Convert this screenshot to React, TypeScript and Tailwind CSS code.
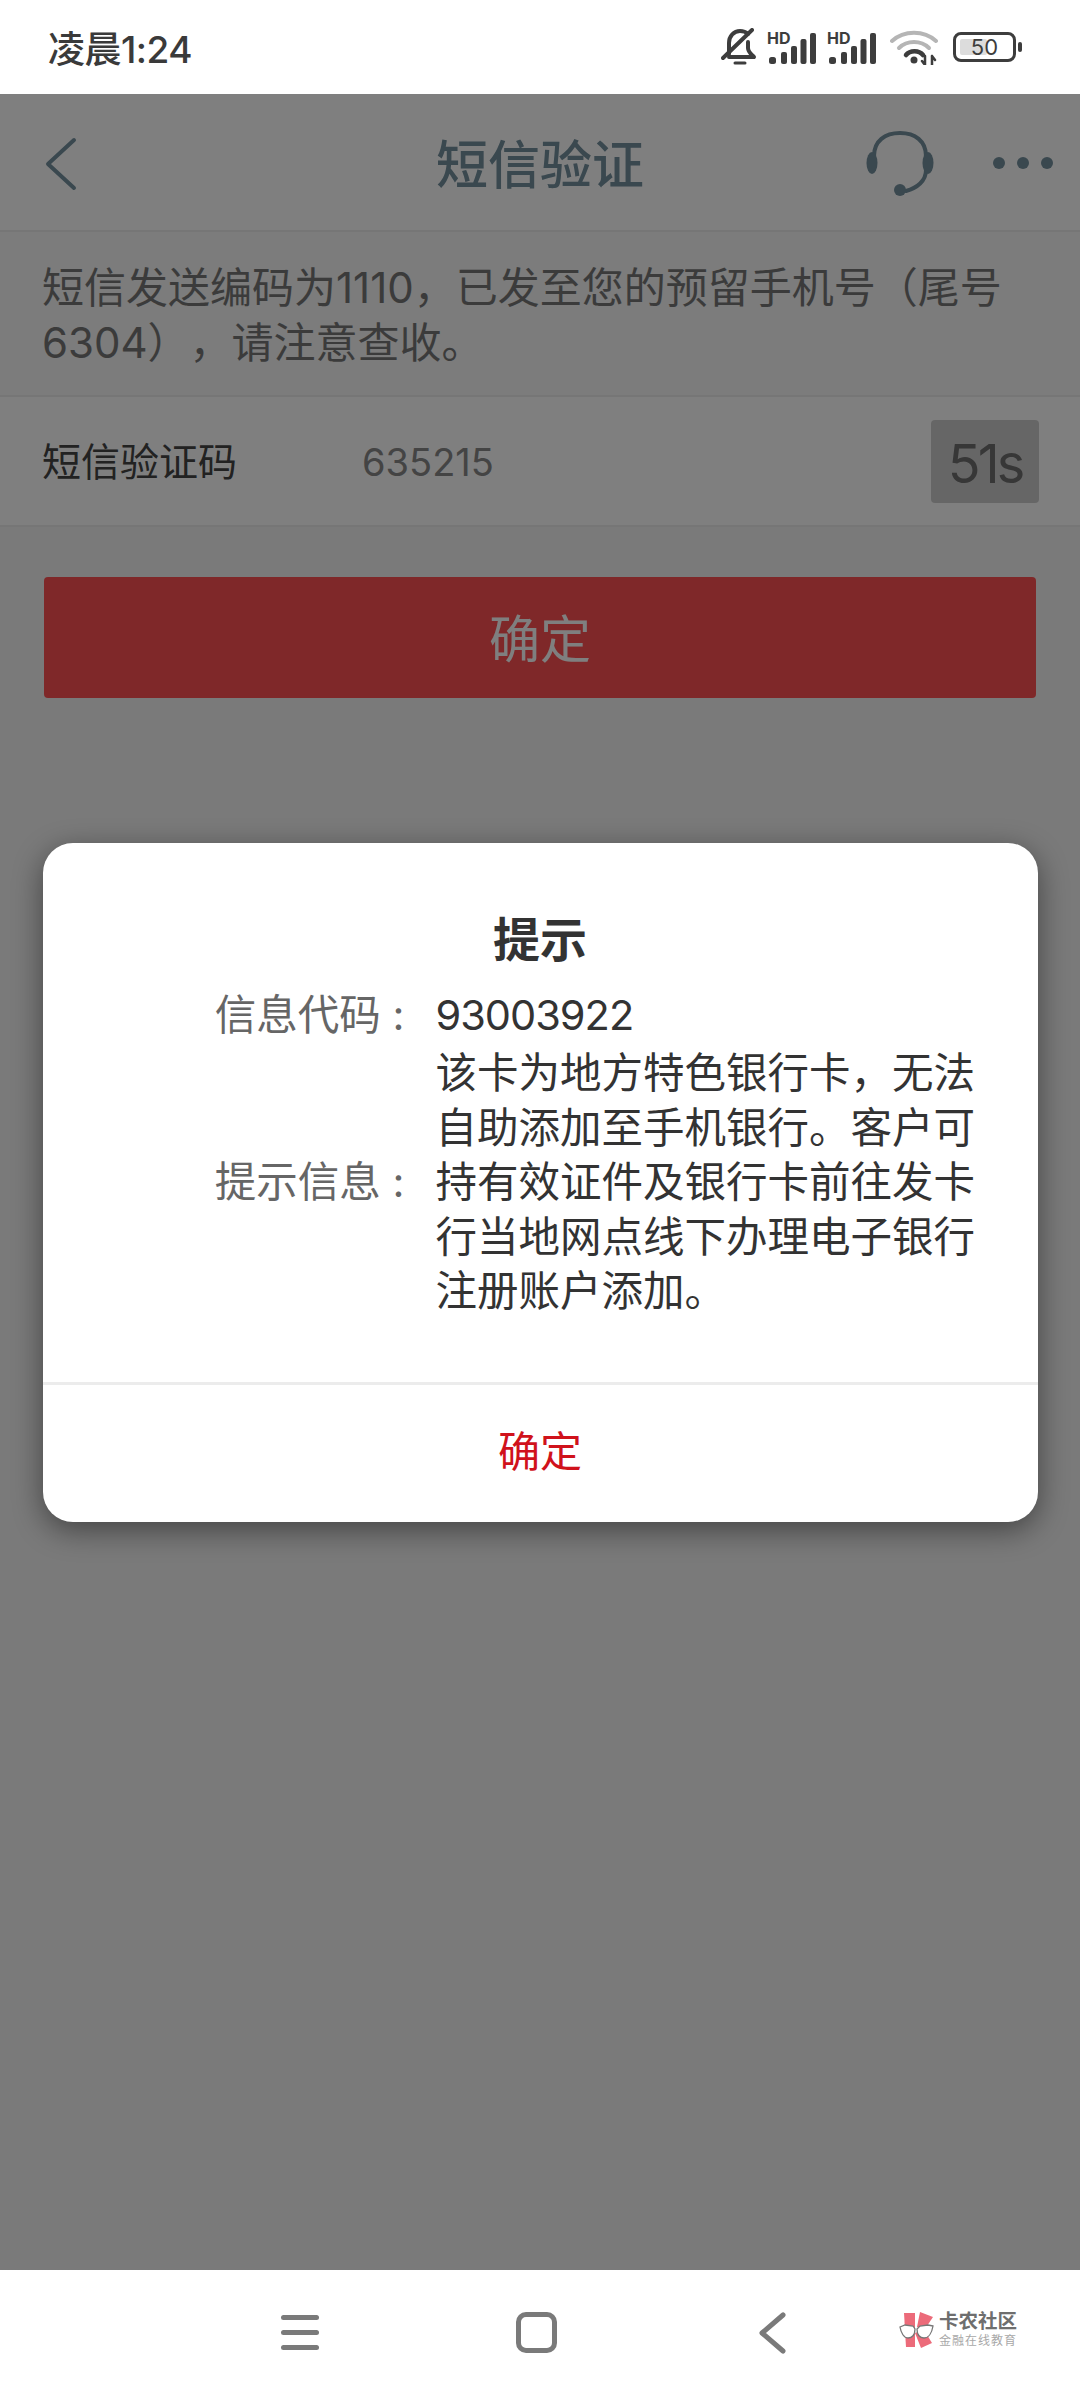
const cjk = { fontFamily: 'Inter, "Noto Sans CJK SC", "Noto Sans", sans-serif' };

function Signal() {
  return (
    <svg width="51" height="34" viewBox="0 0 51 34" fill="#3d3d3d">
      <text x="0" y="14" fontSize="16" fontWeight="700" fontFamily="Inter, sans-serif">HD</text>
      <rect x="2" y="27" width="7" height="7" rx="2.5" />
      <rect x="14" y="22" width="6" height="12" rx="2" />
      <rect x="24" y="16" width="6" height="18" rx="2" />
      <rect x="33.5" y="9" width="6" height="25" rx="2" />
      <rect x="43" y="3" width="6" height="31" rx="2" />
    </svg>
  );
}

function StatusBar() {
  return (
    <div className="h-[94px] bg-white flex items-center shrink-0 pl-[48px]">
      <span className="text-[37px] leading-[44px] font-medium text-[#3a3a3a] w-[673px] pt-[6px] tracking-[-0.5px]">凌晨1:24</span>
      <div className="flex items-center">
        <svg width="36" height="38" viewBox="0 0 36 38" fill="none" stroke="#3d3d3d" strokeWidth="4" strokeLinecap="round" strokeLinejoin="round">
          <path d="M8 26V15C8 8 13 3 19 3c3 0 6 1 8 3" />
          <path d="M27 14v6c0 4 3 6 6 9H8" />
          <path d="M2 30L31 2" />
          <path d="M14 35h10" strokeWidth="3" />
        </svg>
        <div className="ml-[10px]"><Signal /></div>
        <div className="ml-[9px]"><Signal /></div>
        <svg className="ml-[12px]" width="48" height="36" viewBox="0 0 48 36" fill="none" strokeLinecap="round">
          <path d="M2 12C14 1 34 1 46 12" stroke="#b5b5b5" strokeWidth="4" />
          <path d="M9 19C17 11 31 11 39 19" stroke="#b5b5b5" strokeWidth="4" />
          <path d="M16 26C20 21 29 21 33 26" stroke="#3d3d3d" strokeWidth="4.5" />
          <circle cx="24" cy="31" r="3.5" fill="#3d3d3d" />
          <path d="M35 27v9M35 36l-3-4M42 36v-9M42 27l3 4" stroke="#3d3d3d" strokeWidth="2.5" />
        </svg>
        <div className="ml-[15px] flex items-center">
          <div className="relative w-[63px] h-[30px] rounded-[8px] border-[3px] border-[#3d3d3d] flex items-center justify-center">
            <div className="absolute left-[4px] top-[4px] bottom-[4px] w-[27px] bg-[#dcdcdc] rounded-[2px]" />
            <span className="relative text-[22px] leading-[24px] text-[#3d3d3d]">50</span>
          </div>
          <div className="ml-[2px] w-[4px] h-[10px] rounded-[2px] bg-[#3d3d3d]" />
        </div>
      </div>
    </div>
  );
}

function Header() {
  return (
    <div className="relative h-[138px] shrink-0 bg-white border-b-[2px] border-[#ececec] flex items-center justify-center">
      <svg className="absolute left-[45px] top-[43px]" width="32" height="54" viewBox="0 0 32 54" fill="none" stroke="#74909e" strokeWidth="4" strokeLinecap="round" strokeLinejoin="round">
        <path d="M29 3L3 27l26 24" />
      </svg>
      <span className="text-[52px] leading-[60px] text-[#74909e] font-medium pt-[8px]">短信验证</span>
      <svg className="absolute left-[866px] top-[36px]" width="68" height="66" viewBox="0 0 68 66" fill="none" stroke="#74909e" strokeLinecap="round">
        <path d="M8 26C8 11 19 3 34 3s26 8 26 23v14c0 11-9 18-20 21" strokeWidth="4" />
        <ellipse cx="6" cy="33" rx="5.5" ry="11" fill="#74909e" stroke="none" />
        <ellipse cx="62" cy="33" rx="5.5" ry="11" fill="#74909e" stroke="none" />
        <circle cx="34" cy="60" r="6" fill="#74909e" stroke="none" />
      </svg>
      <div className="absolute left-[993px] top-[63px] flex gap-[12px]">
        <div className="w-[12px] h-[12px] rounded-full bg-[#74909e]" />
        <div className="w-[12px] h-[12px] rounded-full bg-[#74909e]" />
        <div className="w-[12px] h-[12px] rounded-full bg-[#74909e]" />
      </div>
    </div>
  );
}

function NavBar() {
  return (
    <div className="h-[130px] shrink-0 bg-white flex items-start pt-[42px] pl-[281px]">
      <div className="flex flex-col gap-[10px] w-[38px] pt-[3px]">
        <div className="h-[5px] rounded-full bg-[#7a7a7a]" />
        <div className="h-[5px] rounded-full bg-[#7a7a7a]" />
        <div className="h-[5px] rounded-full bg-[#7a7a7a]" />
      </div>
      <div className="ml-[197px] w-[41px] h-[41px] rounded-[10px] border-[5px] border-[#7a7a7a]" />
      <svg className="ml-[201px]" width="28" height="42" viewBox="0 0 28 42" fill="none" stroke="#7a7a7a" strokeWidth="5" strokeLinecap="round" strokeLinejoin="round">
        <path d="M25 3L4 21l21 18" />
      </svg>
      <div className="ml-[113px] -mt-[1px] flex items-center">
        <svg width="35" height="36" viewBox="0 0 35 36">
          <path d="M5 1h11v34H7Z" fill="#ec6b7a" />
          <path d="M18 15L21 0l13 5-8 12Z" fill="#ec6b7a" />
          <path d="M16 21l9-3 8 13-11 5Z" fill="#ec6b7a" />
          <path d="M1 15l5-2 8 1 2 3c0 6-3 9-7 9-4 0-7-5-8-11Z" fill="#fff" stroke="#777" strokeWidth="1.3" />
          <path d="M34 14l-5-1-8 1-3 3c0 6 3 9 7 9 5 0 8-6 9-12Z" fill="#fff" stroke="#777" strokeWidth="1.3" />
        </svg>
        <div className="ml-[5px] flex flex-col w-[80px]">
          <span className="text-[19.5px] leading-[21px] font-semibold text-[#6e6e6e]">卡农社区</span>
          <span className="text-[12px] leading-[15px] mt-[1px] tracking-[1px] text-[#a8a8a8]">金融在线教育</span>
        </div>
      </div>
    </div>
  );
}

export default function App() {
  return (
    <div className="relative w-[1080px] h-[2400px] flex flex-col bg-white overflow-hidden [text-spacing-trim:space-all]" style={cjk}>
      <StatusBar />
      <div className="flex-1 flex flex-col bg-[#f4f4f4]">
        <Header />
        <div className="h-[165px] shrink-0 bg-[#f8f8f8] border-b-[2px] border-[#ececec] px-[42px] pt-[28px] text-[42px] text-[#777]">
          <p className="h-[55px] leading-[55px]">短信发送编码为1110，已发至您的预留手机号（尾号</p>
          <p className="h-[55px] leading-[55px]">6304），请注意查收。</p>
        </div>
        <div className="h-[130px] shrink-0 bg-white border-b-[2px] border-[#ececec] flex items-center pl-[42px] pr-[41px]">
          <span className="text-[39px] leading-[50px] text-[#444] w-[320px] mt-[2px]">短信验证码</span>
          <span className="text-[38px] leading-[50px] text-[#888] flex-1 mt-[2px]">635215</span>
          <div className="w-[108px] h-[83px] rounded-[4px] bg-[#cdcdcd] flex items-center justify-center pt-[4px] text-[54px] tracking-[-3px] text-[#6e6e6e]">51s</div>
        </div>
        <button className="mt-[50px] mx-[44px] h-[121px] rounded-[4px] bg-[#fe5153] text-white text-[51px] flex items-center justify-center pt-[6px] shrink-0">确定</button>
      </div>
      <NavBar />

      <div className="absolute left-0 right-0 top-[94px] bottom-[130px] bg-black/50 flex items-center justify-center">
        <div className="w-[995px] h-[679px] bg-white rounded-[30px] shadow-[0_8px_30px_rgba(0,0,0,0.45)] flex flex-col">
          <div className="flex-1 pt-[67px]">
            <h2 className="text-[47px] leading-[60px] font-bold text-[#333] text-center">提示</h2>
            <div className="mt-[18px] grid grid-cols-[362px_560px] gap-x-[31px] gap-y-[4px] items-center text-[41.5px]">
              <span className="text-[#666] text-right h-[54.5px] leading-[54.5px]">信息代码 :</span>
              <span className="text-[#333] h-[54.5px] leading-[54.5px] tracking-[-1px]">93003922</span>
              <span className="text-[#666] text-right h-[54.5px] leading-[54.5px]">提示信息 :</span>
              <div className="text-[#333]">
                <p className="h-[54.5px] leading-[54.5px]">该卡为地方特色银行卡，无法</p>
                <p className="h-[54.5px] leading-[54.5px]">自助添加至手机银行。客户可</p>
                <p className="h-[54.5px] leading-[54.5px]">持有效证件及银行卡前往发卡</p>
                <p className="h-[54.5px] leading-[54.5px]">行当地网点线下办理电子银行</p>
                <p className="h-[54.5px] leading-[54.5px]">注册账户添加。</p>
              </div>
            </div>
          </div>
          <div className="h-[140px] shrink-0 border-t-[3px] border-[#ececec] flex items-center justify-center pb-[4px] text-[42px] text-[#d0121b]">确定</div>
        </div>
      </div>
    </div>
  );
}
